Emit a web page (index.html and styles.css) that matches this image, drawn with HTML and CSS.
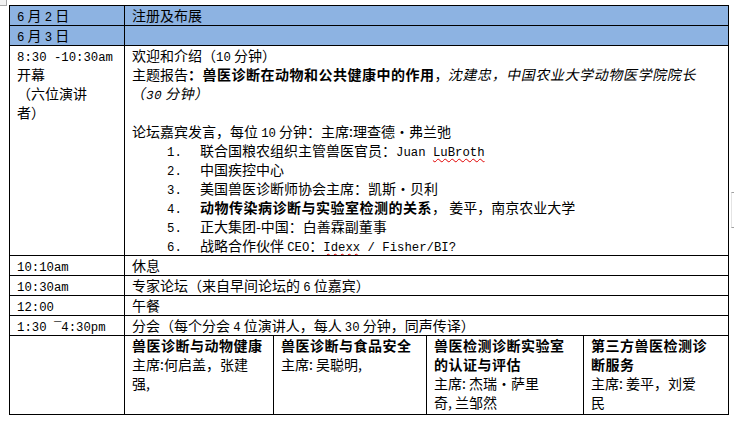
FILE: index.html
```html
<!DOCTYPE html>
<html lang="zh-CN">
<head>
<meta charset="utf-8">
<title>日程</title>
<link rel="stylesheet" href="styles.css">
</head>
<body>
<div class="handle"></div>
<div class="edge-mark"></div>
<div class="page">
<table class="agenda">
  <colgroup>
    <col class="c0"><col class="c1"><col class="c2"><col class="c3"><col class="c4">
  </colgroup>
  <tr class="hdr">
    <td><span class="l">6</span> 月 <span class="l">2</span> 日</td>
    <td colspan="4">注册及布展</td>
  </tr>
  <tr class="hdr">
    <td><span class="l">6</span> 月 <span class="l">3</span> 日</td>
    <td colspan="4"></td>
  </tr>
  <tr class="top">
    <td><span class="l">8:30 -10:30am</span><br>开幕<br>（六位演讲<br>者）</td>
    <td colspan="4">
      <div>欢迎和介绍（<span class="l">10</span> 分钟）</div>
      <div>主题报告<b>：兽医诊断在动物和公共健康中的作用</b>，<span class="it">沈建忠，中国农业大学动物医学院院长</span></div>
      <div><span class="it">（<span class="l">30</span> 分钟）</span></div>
      <div class="blank"></div>
      <div>论坛嘉宾发言，每位 <span class="l">10</span> 分钟：主席:理查德・弗兰弛</div>
      <div class="li"><span class="n"><span class="l">1.</span></span><span>联合国粮农组织主管兽医官员：<span class="l">Juan <span class="sp">LuBroth</span></span></span></div>
      <div class="li"><span class="n"><span class="l">2.</span></span><span>中国疾控中心</span></div>
      <div class="li"><span class="n"><span class="l">3.</span></span><span>美国兽医诊断师协会主席：凯斯•贝利</span></div>
      <div class="li"><span class="n"><span class="l">4.</span></span><span><b>动物传染病诊断与实验室检测的关系</b>， 姜平，南京农业大学</span></div>
      <div class="li"><span class="n"><span class="l">5.</span></span><span>正大集团-中国：白善霖副董事</span></div>
      <div class="li"><span class="n"><span class="l">6.</span></span><span>战略合作伙伴 <span class="l">CEO</span>：<span class="l"><span class="sp">Idexx</span> / Fisher/BI?</span></span></div>
    </td>
  </tr>
  <tr>
    <td><span class="l">10:10am</span></td>
    <td colspan="4">休息</td>
  </tr>
  <tr>
    <td><span class="l">10:30am</span></td>
    <td colspan="4">专家论坛（来自早间论坛的 <span class="l">6</span> 位嘉宾）</td>
  </tr>
  <tr>
    <td><span class="l">12:00</span></td>
    <td colspan="4">午餐</td>
  </tr>
  <tr>
    <td><span class="l">1:30 ‾4:30pm</span></td>
    <td colspan="4">分会（每个分会 <span class="l">4</span> 位演讲人，每人 <span class="l">30</span> 分钟，同声传译）</td>
  </tr>
  <tr class="sessions">
    <td></td>
    <td><b>兽医诊断与动物健康</b><br>主席:何启盖，张建<br>强,</td>
    <td><b>兽医诊断与食品安全</b><br>主席: 吴聪明,</td>
    <td><b>兽医检测诊断实验室<br>的认证与评估</b><br>主席: 杰瑞・萨里<br>奇, 兰邹然</td>
    <td><b>第三方兽医检测诊<br>断服务</b><br>主席: 姜平，刘爱<br>民</td>
  </tr>
</table>
</div>
</body>
</html>
```

FILE: styles.css
```css
html, body {
  margin: 0;
  padding: 0;
  background: #ffffff;
}

body {
  font-family: "Noto Sans CJK SC", "Noto Sans", sans-serif;
  font-size: 14px;
  line-height: 19px;
  color: #000000;
  width: 734px;
  height: 424px;
  overflow: hidden;
  position: relative;
}

.page {
  padding: 5px 0 0 9px;
}

.agenda {
  border-collapse: collapse;
  table-layout: fixed;
  width: 720px;
}

.c0 { width: 115px; }
.c1 { width: 149px; }
.c2 { width: 153px; }
.c3 { width: 157px; }
.c4 { width: 145px; }

.agenda td {
  border: 1px solid #000000;
  padding: 0 7px;
  height: 19px;
  vertical-align: top;
  white-space: nowrap;
  overflow: hidden;
}

.hdr td {
  background: #8db3e2;
}

.l {
  font-family: "Liberation Mono", "DejaVu Sans Mono", monospace;
  font-size: 12.3px;
  line-height: 12px;
}

b {
  font-weight: 700;
  letter-spacing: 0.5px;
}

.it {
  display: inline-block;
  transform: skewX(-12deg);
  letter-spacing: 0.6px;
}

.blank {
  height: 19px;
}

.li {
  display: flex;
  padding-left: 35px;
}

.li .n {
  width: 33px;
  flex: none;
  line-height: 19px;
}

.sp {
  text-decoration: underline wavy #e00000;
  text-decoration-thickness: 1px;
  text-underline-offset: 2px;
}

.agenda .sessions td {
  height: 78px;
}

.handle {
  position: absolute;
  left: 0;
  top: 0;
  width: 6px;
  height: 5px;
  border: 1px solid #a8a8a8;
  border-left: none;
  border-top: none;
  background: #f2f2f2;
}

.edge-mark {
  position: absolute;
  left: 731px;
  top: 192px;
  width: 3px;
  height: 34px;
  border-top: 1px solid #a0a0a0;
  border-bottom: 1px solid #a0a0a0;
  border-left: 1px solid #e4e4e4;
}
```
